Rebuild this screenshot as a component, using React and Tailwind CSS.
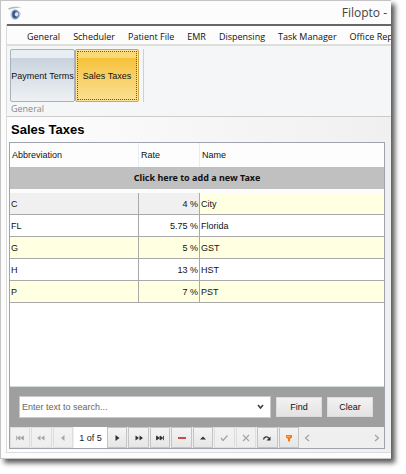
import React, { useState } from 'react';

const tabs = ['General', 'Scheduler', 'Patient File', 'EMR', 'Dispensing', 'Task Manager', 'Office Rep'];

const taxes = [
  { abbr: 'C', rate: '4 %', name: 'City' },
  { abbr: 'FL', rate: '5.75 %', name: 'Florida' },
  { abbr: 'G', rate: '5 %', name: 'GST' },
  { abbr: 'H', rate: '13 %', name: 'HST' },
  { abbr: 'P', rate: '7 %', name: 'PST' },
];

const AppLogo = () => (
  <svg width="14" height="14" viewBox="0 0 14 14" aria-hidden="true">
    <path d="M0 2.500C3 .4 10 .2 13.500 1.400 9.500 1.500 4 2.200 1 3.800z" fill="#a9bac3" />
    <ellipse cx="6.500" cy="8.500" rx="4.200" ry="5.200" fill="#cfd8e4" />
    <ellipse cx="7.500" cy="8.500" rx="3.800" ry="4.800" fill="#6f88b4" />
    <ellipse cx="6.600" cy="8.500" rx="2.200" ry="3.400" fill="#3a5590" />
    <ellipse cx="8.500" cy="8.300" rx="1.700" ry="2" fill="#dbe6f4" />
    <path d="M10.800 5.500l1.500 2.500-1.500 3" stroke="#a9bad2" strokeWidth="1" fill="none" />
  </svg>
);

const icons = {
  first: <path d="M2.500 3.800v4.400M6 4v4L3.200 6zM9.500 4v4L6.700 6z" fill="currentColor" stroke="currentColor" strokeWidth=".8" />,
  prevPage: <path d="M5.500 3.500v5L2 6zM9.500 3.500v5L6 6z" fill="currentColor" />,
  prev: <path d="M7.500 3v6L4 6z" fill="currentColor" />,
  next: <path d="M4.500 3v6L8.500 6z" fill="currentColor" />,
  nextPage: <path d="M2.500 3.500v5L6 6zM6.500 3.500v5L10 6z" fill="currentColor" />,
  last: <path d="M2.500 4v4L5.300 6zM6 4v4L8.800 6zM9.500 3.800v4.400" fill="currentColor" stroke="currentColor" strokeWidth=".8" />,
  remove: <path d="M2 6h8" stroke="#c81e1e" strokeWidth="1.600" />,
  edit: <path d="M3 7.500h6L6 4.500z" fill="currentColor" />,
  post: <path d="M3 6l2 2.500L9.500 3.500" fill="none" stroke="currentColor" strokeWidth="1.300" />,
  cancel: <path d="M3 3l6 6M9 3L3 9" stroke="currentColor" strokeWidth="1.200" />,
  refresh: (
    <>
      <path d="M2.500 7.500C3 4.500 6.500 4 8 6.500" fill="none" stroke="currentColor" strokeWidth="1.300" />
      <path d="M9.500 4.500v4H5.500z" fill="currentColor" />
    </>
  ),
  filter: (
    <>
      <path d="M3 3h6v2.500L7 7v2.500H5V7L3 5.500z" fill="#f57c14" />
      <path d="M4 4.500h3" stroke="#ffb067" strokeWidth="1" />
    </>
  ),
};

const Glyph = ({ name }) => (
  <svg width="12" height="12" viewBox="0 0 12 12" aria-hidden="true">
    {icons[name]}
  </svg>
);

const NavButton = ({ icon, label, disabled }) => (
  <button
    type="button"
    aria-label={label}
    disabled={disabled}
    className="mr-px flex min-w-0 items-center justify-center border border-[#c4c4c4] bg-linear-to-b from-[#f4f4f4] to-[#e6e6e6] text-[#303030] disabled:border-[#dedede] disabled:from-[#f2f2f2] disabled:to-[#eeeeee] disabled:text-[#a6a6a6]"
  >
    <Glyph name={icon} />
  </button>
);

const RecordNavigator = () => (
  <div className="flex h-[21px] bg-[#efefef] text-[#a0a0a0]">
    <div className="grid w-16 shrink-0 grid-cols-3">
      <NavButton icon="first" label="First" disabled />
      <NavButton icon="prevPage" label="Previous page" disabled />
      <NavButton icon="prev" label="Previous" disabled />
    </div>
    <div className="flex w-[33px] shrink-0 items-center justify-center bg-white text-[9px] text-[#222222]">1 of 5</div>
    <div className="grid w-[193px] shrink-0 grid-cols-9">
      <NavButton icon="next" label="Next" />
      <NavButton icon="nextPage" label="Next page" />
      <NavButton icon="last" label="Last" />
      <NavButton icon="remove" label="Delete" />
      <NavButton icon="edit" label="Edit" />
      <NavButton icon="post" label="Save" disabled />
      <NavButton icon="cancel" label="Cancel" disabled />
      <NavButton icon="refresh" label="Refresh" />
      <NavButton icon="filter" label="Filter" />
    </div>
    <div className="flex flex-1 items-center justify-between px-1">
      <button type="button" aria-label="Scroll left">
        <svg width="6" height="8" viewBox="0 0 6 8"><path d="M5 1L1.500 4 5 7" fill="none" stroke="currentColor" strokeWidth="1.200" /></svg>
      </button>
      <button type="button" aria-label="Scroll right">
        <svg width="6" height="8" viewBox="0 0 6 8"><path d="M1 1l3.500 3L1 7" fill="none" stroke="currentColor" strokeWidth="1.200" /></svg>
      </button>
    </div>
  </div>
);

const TaxTable = () => (
  <table className="w-full table-fixed border-separate border-spacing-0 text-left">
    <colgroup>
      <col className="w-[129px]" />
      <col className="w-[61px]" />
      <col />
    </colgroup>
    <thead>
      <tr className="h-6 bg-[#fdfdfd]">
        <th className="border-r border-[#e6edf5] px-0.5 font-normal">Abbreviation</th>
        <th className="border-r border-[#e6edf5] px-0.5 font-normal">Rate</th>
        <th className="px-0.5 font-normal">Name</th>
      </tr>
    </thead>
    <tbody>
      <tr className="h-[26px]">
        <td colSpan={3} className="border-b-4 border-[#fcfcfc] bg-[#c0c0c0] p-0 text-center font-['Noto_Sans',sans-serif] text-[9px] font-bold">
          Click here to add a new Taxe
        </td>
      </tr>
      {taxes.map((tax, i) => {
        const stripe = i % 2 === 0 ? 'bg-[#ffffe1]' : 'bg-white';
        const lead = i === 0 ? 'bg-[#f0f0f0]' : stripe;
        return (
          <tr key={tax.abbr} className="h-[22px]">
            <td className={`border-r border-b border-[#a9a9a9] px-px py-0 ${lead}`}>{tax.abbr}</td>
            <td className={`border-r border-b border-[#a9a9a9] px-px py-0 text-right ${lead}`}>{tax.rate}</td>
            <td className={`border-b border-[#a9a9a9] px-px py-0 ${stripe}`}>{tax.name}</td>
          </tr>
        );
      })}
    </tbody>
  </table>
);

const SearchBar = () => {
  const [query, setQuery] = useState('');

  return (
    <form onSubmit={(e) => e.preventDefault()} className="flex h-[41px] items-center gap-[5px] border-t border-[#d4dbde] bg-[#9f9f9f] pr-[11px] pl-[9px]">
      <div className="flex h-[22px] min-w-0 flex-1 items-center border border-[#c9c9c9] bg-white">
        <input
          type="text"
          aria-label="Search"
          placeholder="Enter text to search..."
          value={query}
          onChange={(e) => setQuery(e.target.value)}
          className="h-full min-w-0 flex-1 px-0.5 text-[9px] outline-none placeholder:text-[#666666]"
        />
        <button type="button" aria-label="Show recent searches" className="px-1.5">
          <svg width="7" height="6" viewBox="0 0 7 6"><path d="M1 1l2.500 3L6 1" fill="none" stroke="#3c3c3c" strokeWidth="1.500" /></svg>
        </button>
      </div>
      <button type="submit" className="h-5 w-[46px] border border-[#dcdcdc] bg-linear-to-b from-[#f2f2f2] to-[#e3e3e3]">Find</button>
      <button type="button" onClick={() => setQuery('')} className="h-5 w-[46px] border border-[#dcdcdc] bg-linear-to-b from-[#f2f2f2] to-[#e3e3e3]">Clear</button>
    </form>
  );
};

const App = () => (
  <div className="flex min-h-screen flex-col bg-white pr-[15px] pb-[15px] font-['Liberation_Sans',sans-serif] text-[9px] leading-3 text-[#111111]">
    <div className="flex flex-1 flex-col border border-r-0 border-[#c4c4c4] bg-[#fcfcfc] pb-[5px] pl-[5px] shadow-[4px_4px_5px_rgba(0,0,0,0.65)]">
      <header className="flex h-[23px] items-center justify-between pr-1 pl-[2px]">
        <AppLogo />
        <h1 className="font-['Open_Sans',sans-serif] text-[12px] text-[#444444]">Filopto -</h1>
      </header>

      <div className="flex flex-1 flex-col border-b border-l border-[#dcdcdc]">
        <nav className="flex h-[22px] items-center gap-[13px] overflow-hidden border-t-2 border-b-2 border-t-[#666666] border-b-[#dededa] pt-1 pl-5 font-['Open_Sans',sans-serif] whitespace-nowrap">
          {tabs.map((tab) => (
            <a key={tab} href="#" className="shrink-0">{tab}</a>
          ))}
        </nav>

        <section className="border-b border-[#cccccc] bg-[#f4f6f8] pt-[3px] pl-[3px]">
          <div className="flex h-[53px]">
            <button type="button" className="w-[65px] rounded-xs border border-[#a9b1ba] bg-linear-to-b from-[#e9eef2] from-15% via-[#c9d3dd] via-16% to-[#eef1f4] whitespace-nowrap">
              Payment Terms
            </button>
            <button type="button" className="mr-1 w-16 rounded-xs border border-[#d0a94c] bg-[#fbe39a] p-px whitespace-nowrap">
              <span className="flex h-full items-center justify-center border border-dotted border-[#6a5a30] bg-linear-to-b from-[#f9d876] from-12% via-[#f5c238] via-13% to-[#fbdf8d]">
                Sales Taxes
              </span>
            </button>
            <div className="border-l border-[#d0d0d0]" />
          </div>
          <p className="flex h-[14px] items-center pl-px font-['Open_Sans',sans-serif] text-[#8a8a8a]">General</p>
        </section>

        <main className="flex flex-1 flex-col bg-linear-to-r from-[#fdfdfd] to-[#f0f0f0] pr-[6px] pb-[3px] pl-[2px]">
          <h2 className="flex h-[25px] items-center pl-0.5 text-[13px] font-bold text-black">Sales Taxes</h2>
          <div className="flex flex-1 flex-col border border-[#9fa3ad] bg-white">
            <div className="flex-1">
              <TaxTable />
            </div>
            <SearchBar />
            <RecordNavigator />
          </div>
        </main>
      </div>
    </div>
  </div>
);

export default App;
